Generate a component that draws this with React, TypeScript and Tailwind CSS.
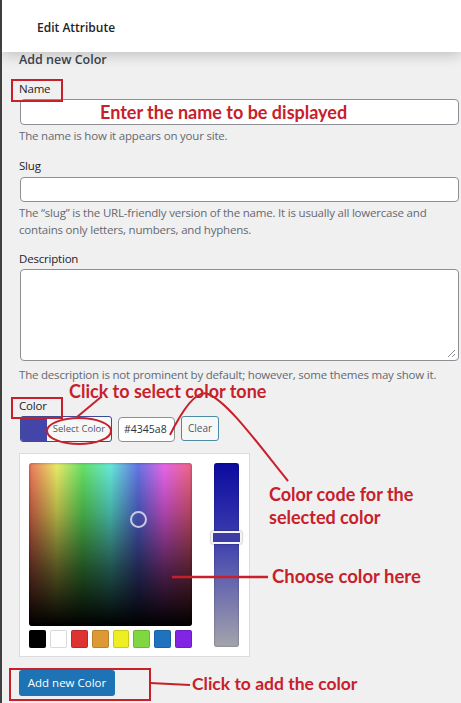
const UI = "font-['Segoe_UI','Open_Sans',sans-serif]";
const NOTE = "font-['Lato','Liberation_Sans',sans-serif] font-bold text-[#c8202a]";

const swatches = ["#000000", "#ffffff", "#dd3333", "#dd9933", "#eeee22", "#81d742", "#1e73be", "#8224e3"];

function ColorPicker() {
  return (
    <div className="mt-[11px] flex h-[204px] w-[231px] border border-[#dcdcde] bg-white pl-[9px] pt-[9px]">
      <div className="flex w-[163px] flex-col">
        <div className="relative h-[163px] w-[163px] overflow-hidden rounded-[3px] bg-[linear-gradient(to_right,#ee6a50,#eaea5c_17%,#5ae05a_33%,#5ae8d8_50%,#5a6ae4_67%,#e65ae8_83%,#ee5a78)]">
          <div className="absolute inset-0 bg-[linear-gradient(to_bottom,rgba(255,255,255,0.08),rgba(0,0,0,0.25)_30%,rgba(0,0,0,0.65)_65%,#000_100%)]" />
          <div className="absolute inset-0 rounded-[3px] shadow-[inset_0_0_3px_rgba(0,0,0,0.4)]" />
          <div className="absolute left-[101px] top-[48px] h-[17px] w-[17px] rounded-full border-2 border-[#c8c8ea]" />
        </div>
        <div className="mt-[4px] flex gap-[4px]">
          {swatches.map((c) => (
            <div
              key={c}
              className="h-[18px] w-[17px] rounded-[2px] shadow-[inset_0_0_0_1px_rgba(0,0,0,0.15)]"
              style={{ backgroundColor: c }}
            />
          ))}
        </div>
      </div>
      <div className="relative ml-[22px] h-[184px] w-[25px] rounded-[3px] bg-[linear-gradient(to_bottom,#0a0aa0,#3a3cae_40%,#6f70ae_70%,#a4a4ac)] shadow-[inset_0_0_2px_rgba(0,0,0,0.4)]">
        <div className="absolute left-[-3px] top-[68px] h-[13px] w-[31px] rounded-[2px] border-2 border-[#f4f4f8] bg-[#3c3ea6] shadow-[0_0_2px_rgba(0,0,0,0.5)]" />
      </div>
    </div>
  );
}

function Annotations() {
  return (
    <>
      <svg className="pointer-events-none absolute left-[-2px] top-0" width="461" height="703">
        <g fill="none" stroke="#c8202a" strokeWidth="2">
          <rect x="12" y="80" width="50" height="21" />
          <rect x="12" y="398" width="50" height="20" />
          <line x1="77" y1="417" x2="101" y2="397" />
          <ellipse cx="79" cy="431" rx="32" ry="13" />
          <path d="M170 435 C 185 405, 198 390, 208 394 C 228 402, 258 444, 288 481" />
          <line x1="172" y1="577" x2="268" y2="577" strokeWidth="2.5" />
          <rect x="10" y="669" width="140" height="31" />
          <line x1="150" y1="683" x2="190" y2="685" />
        </g>
      </svg>
      <div className={`${NOTE} absolute left-[98px] top-[100px] text-[18px] leading-[24px]`}>
        Enter the name to be displayed
      </div>
      <div className={`${NOTE} absolute left-[67px] top-[379px] text-[18px] leading-[24px]`}>
        Click to select color tone
      </div>
      <div className={`${NOTE} absolute left-[267px] top-[483px] text-[18px] leading-[23px]`}>
        Color code for the
        <br />
        selected color
      </div>
      <div className={`${NOTE} absolute left-[270px] top-[564px] text-[18.5px] leading-[24px]`}>
        Choose color here
      </div>
      <div className={`${NOTE} absolute left-[190px] top-[672px] text-[17.5px] leading-[24px]`}>
        Click to add the color
      </div>
    </>
  );
}

export default function App() {
  return (
    <div className={`${UI} relative h-[703px] w-[461px] overflow-hidden border-l-2 border-[#3f3f3f] bg-[#f0f0f1] text-[#1d2327]`}>
      <header className="relative z-10 flex h-[52px] items-center bg-white pl-[35px] pt-[3px] shadow-[0_4px_12px_rgba(0,0,0,0.18)]">
        <span className="text-[12px] font-semibold text-[#1d2327]">Edit Attribute</span>
      </header>

      <main className="flex flex-col pl-[17px] pr-[2px] text-[11.5px] tracking-[-0.2px]">
        <h2 className="text-[12.5px] font-semibold leading-4 tracking-normal text-[#3c434a]">Add new Color</h2>

        <label className="mt-[13px] leading-4">Name</label>
        <div className="mt-[2px] ml-[1px] h-[26px] rounded-[4px] border border-[#8c8f94] bg-white" />
        <p className="mt-[3px] leading-4 text-[#646970]">The name is how it appears on your site.</p>

        <label className="mt-[14px] leading-4">Slug</label>
        <div className="mt-[3px] ml-[1px] h-[25px] rounded-[4px] border border-[#8c8f94] bg-white" />
        <p className="mt-[2px] leading-[17px] text-[#646970]">
          The “slug” is the URL-friendly version of the name. It is usually all lowercase and
          <br />
          contains only letters, numbers, and hyphens.
        </p>

        <label className="mt-[13px] leading-4">Description</label>
        <div className="relative mt-[2px] ml-[1px] h-[92px] rounded-[4px] border border-[#8c8f94] bg-white">
          <svg className="absolute bottom-[2px] right-[2px]" width="9" height="9" viewBox="0 0 9 9">
            <path d="M8 1 L1 8 M8 5 L5 8" stroke="#8c8f94" strokeWidth="1" />
          </svg>
        </div>
        <p className="mt-[6px] leading-4 text-[#646970]">
          The description is not prominent by default; however, some themes may show it.
        </p>

        <label className="mt-[15px] leading-4">Color</label>
        <div className="mt-[2px] ml-[1px] flex items-start gap-[6px] tracking-normal">
          <div className="flex h-[26px] w-[92px] overflow-hidden rounded-[3px] border border-[#3a4c96] bg-[#f6f7f7]">
            <div className="w-[26px] bg-[#4345a8]" />
            <span className="flex flex-1 items-center justify-center text-[9.5px] text-[#50575e]">Select Color</span>
          </div>
          <div className="mt-[1px] flex h-[25px] w-[57px] items-center rounded-[4px] border border-[#8c8f94] bg-white pl-[5px] text-[10.5px] text-[#2c3338]">
            #4345a8
          </div>
          <div className="flex h-[25px] w-[38px] items-center justify-center rounded-[3px] border border-[#4d8aa6] bg-[#f6f7f7] text-[10px] text-[#50575e]">
            Clear
          </div>
        </div>

        <ColorPicker />

        <div className="mt-[13px] tracking-normal">
          <button className="h-[26px] w-[96px] rounded-[3px] bg-[#1d73b3] text-[11.5px] text-white">Add new Color</button>
        </div>
      </main>

      <Annotations />
    </div>
  );
}
